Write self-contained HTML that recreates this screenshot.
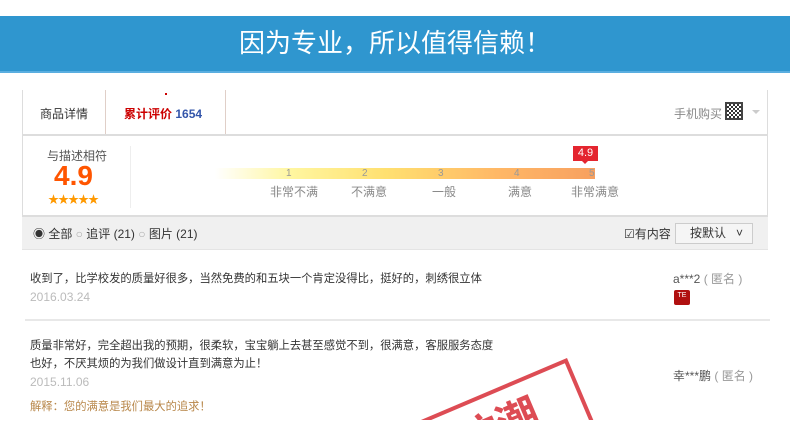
<!DOCTYPE html>
<html style="overflow:hidden;height:421px"><head><meta charset="utf-8"><style>
*{margin:0;padding:0;box-sizing:border-box}
body{width:790px;height:421px;overflow:hidden;background:#fff;font-family:"Liberation Sans","Noto Sans CJK SC",sans-serif;position:relative;font-size:12px;color:#333}
.abs{position:absolute}
.banner{left:0;top:16px;width:790px;height:57px;background:#2f96cf;color:#fff;font-size:26px;text-align:center;line-height:55px;border-bottom:2px solid #5aaee0}
.t{white-space:nowrap;line-height:15px}
.rv{font-size:11.3px}
</style></head><body>
<div class="abs banner">因为专业，所以值得信赖！</div>
<div class="abs" style="left:22px;top:90px;width:746px;height:160px;border-left:1px solid #ddd;border-right:1px solid #ddd"></div>
<div class="abs" style="left:105px;top:90px;width:1px;height:44px;background:#e0cfc8"></div>
<div class="abs" style="left:225px;top:90px;width:1px;height:44px;background:#e0cfc8"></div>
<div class="abs" style="left:165px;top:93px;width:2px;height:2px;background:#c00"></div>
<div class="abs t" style="left:40px;top:107px;color:#333">商品详情</div>
<div class="abs t" style="left:124px;top:107px;color:#c00;font-weight:bold">累计评价 <span style="color:#3355aa">1654</span></div>
<div class="abs t" style="left:674px;top:107px;color:#888">手机购买</div>
<div class="abs" style="left:725px;top:102px;width:18px;height:18px;background:repeating-conic-gradient(#333 0 25%,#fff 0 50%) 0 0/4px 4px;border:2px solid #444"></div>
<div class="abs" style="left:752px;top:110px;border:4px solid transparent;border-top-color:#ccc"></div>
<div class="abs" style="left:22px;top:134px;width:746px;height:2px;background:#ddd"></div>
<div class="abs t" style="left:47px;top:149px;color:#555">与描述相符</div>
<div class="abs t" style="left:54px;top:162px;color:#ff5500;font-size:28px;font-weight:bold;line-height:28px">4.9</div>
<div class="abs t" style="left:48px;top:193px;color:#ff9900;font-size:11px;letter-spacing:-1px">★★★★★</div>
<div class="abs" style="left:130px;top:146px;width:1px;height:62px;background:#eee"></div>
<div class="abs" style="left:215px;top:168px;width:380px;height:11px;background:linear-gradient(90deg,#fff 0%,#fff6a0 20%,#ffe070 45%,#ffb766 75%,#f7a060 100%)"></div>
<div class="abs t" style="left:286px;top:166px;color:#999;font-size:10px">1</div>
<div class="abs t" style="left:362px;top:166px;color:#999;font-size:10px">2</div>
<div class="abs t" style="left:438px;top:166px;color:#999;font-size:10px">3</div>
<div class="abs t" style="left:514px;top:166px;color:#999;font-size:10px">4</div>
<div class="abs t" style="left:589px;top:166px;color:#999;font-size:10px">5</div>
<div class="abs t" style="left:270px;top:185px;color:#888">非常不满</div>
<div class="abs t" style="left:351px;top:185px;color:#888">不满意</div>
<div class="abs t" style="left:432px;top:185px;color:#888">一般</div>
<div class="abs t" style="left:508px;top:185px;color:#888">满意</div>
<div class="abs t" style="left:571px;top:185px;color:#888">非常满意</div>
<div class="abs t" style="left:573px;top:146px;width:25px;height:15px;background:#e4252f;color:#fff;font-size:11px;text-align:center;line-height:15px">4.9</div>
<div class="abs" style="left:582px;top:161px;border:3px solid transparent;border-top-color:#e4252f"></div>
<div class="abs" style="left:22px;top:215px;width:746px;height:35px;background:#f0f0f0;border-top:2px solid #ddd;border-bottom:1px solid #e4e4e4"></div>
<div class="abs t" style="left:33px;top:227px;color:#333">◉ 全部 <span style="color:#aaa">○</span> 追评 (21) <span style="color:#aaa">○</span> 图片 (21)</div>
<div class="abs t" style="left:624px;top:227px;color:#333">☑有内容</div>
<div class="abs t" style="left:675px;top:223px;width:78px;height:21px;border:1px solid #ccc;background:#f5f5f5;line-height:19px;padding-left:14px">按默认 &nbsp;&nbsp;˅</div>
<div class="abs t rv" style="left:30px;top:272px;color:#333">收到了，比学校发的质量好很多，当然免费的和五块一个肯定没得比，挺好的，刺绣很立体</div>
<div class="abs t" style="left:30px;top:290px;color:#bbb">2016.03.24</div>
<div class="abs t" style="left:673px;top:272px;color:#555">a***2 <span style="color:#999">( 匿名 )</span></div>
<div class="abs" style="left:674px;top:290px;width:16px;height:15px;background:#b01010;border-radius:2px;color:#fff;font-size:7px;text-align:center;line-height:12px">TE</div>
<div class="abs" style="left:25px;top:319px;width:745px;height:2px;background:#e8e8e8"></div>
<div class="abs t rv" style="left:30px;top:339px;color:#333">质量非常好，完全超出我的预期，很柔软，宝宝躺上去甚至感觉不到，很满意，客服服务态度</div>
<div class="abs t rv" style="left:30px;top:357px;color:#333">也好，不厌其烦的为我们做设计直到满意为止！</div>
<div class="abs t" style="left:30px;top:375px;color:#bbb">2015.11.06</div>
<div class="abs t" style="left:673px;top:369px;color:#555">幸***鹏 <span style="color:#999">( 匿名 )</span></div>
<div class="abs t rv" style="left:30px;top:400px;color:#b8874a">解释：您的满意是我们最大的追求！</div>
<svg class="abs" style="left:380px;top:330px" width="240" height="90" viewBox="0 0 240 90">
<g opacity="0.8" transform="rotate(-23 187 28)">
<rect x="19" y="30" width="166" height="110" fill="none" stroke="#d5202a" stroke-width="4"/>
<text x="55" y="80" font-family="Noto Sans CJK SC, sans-serif" font-size="42" font-weight="bold" fill="#d5202a">访潮</text>
</g>
</svg>
</body></html>
